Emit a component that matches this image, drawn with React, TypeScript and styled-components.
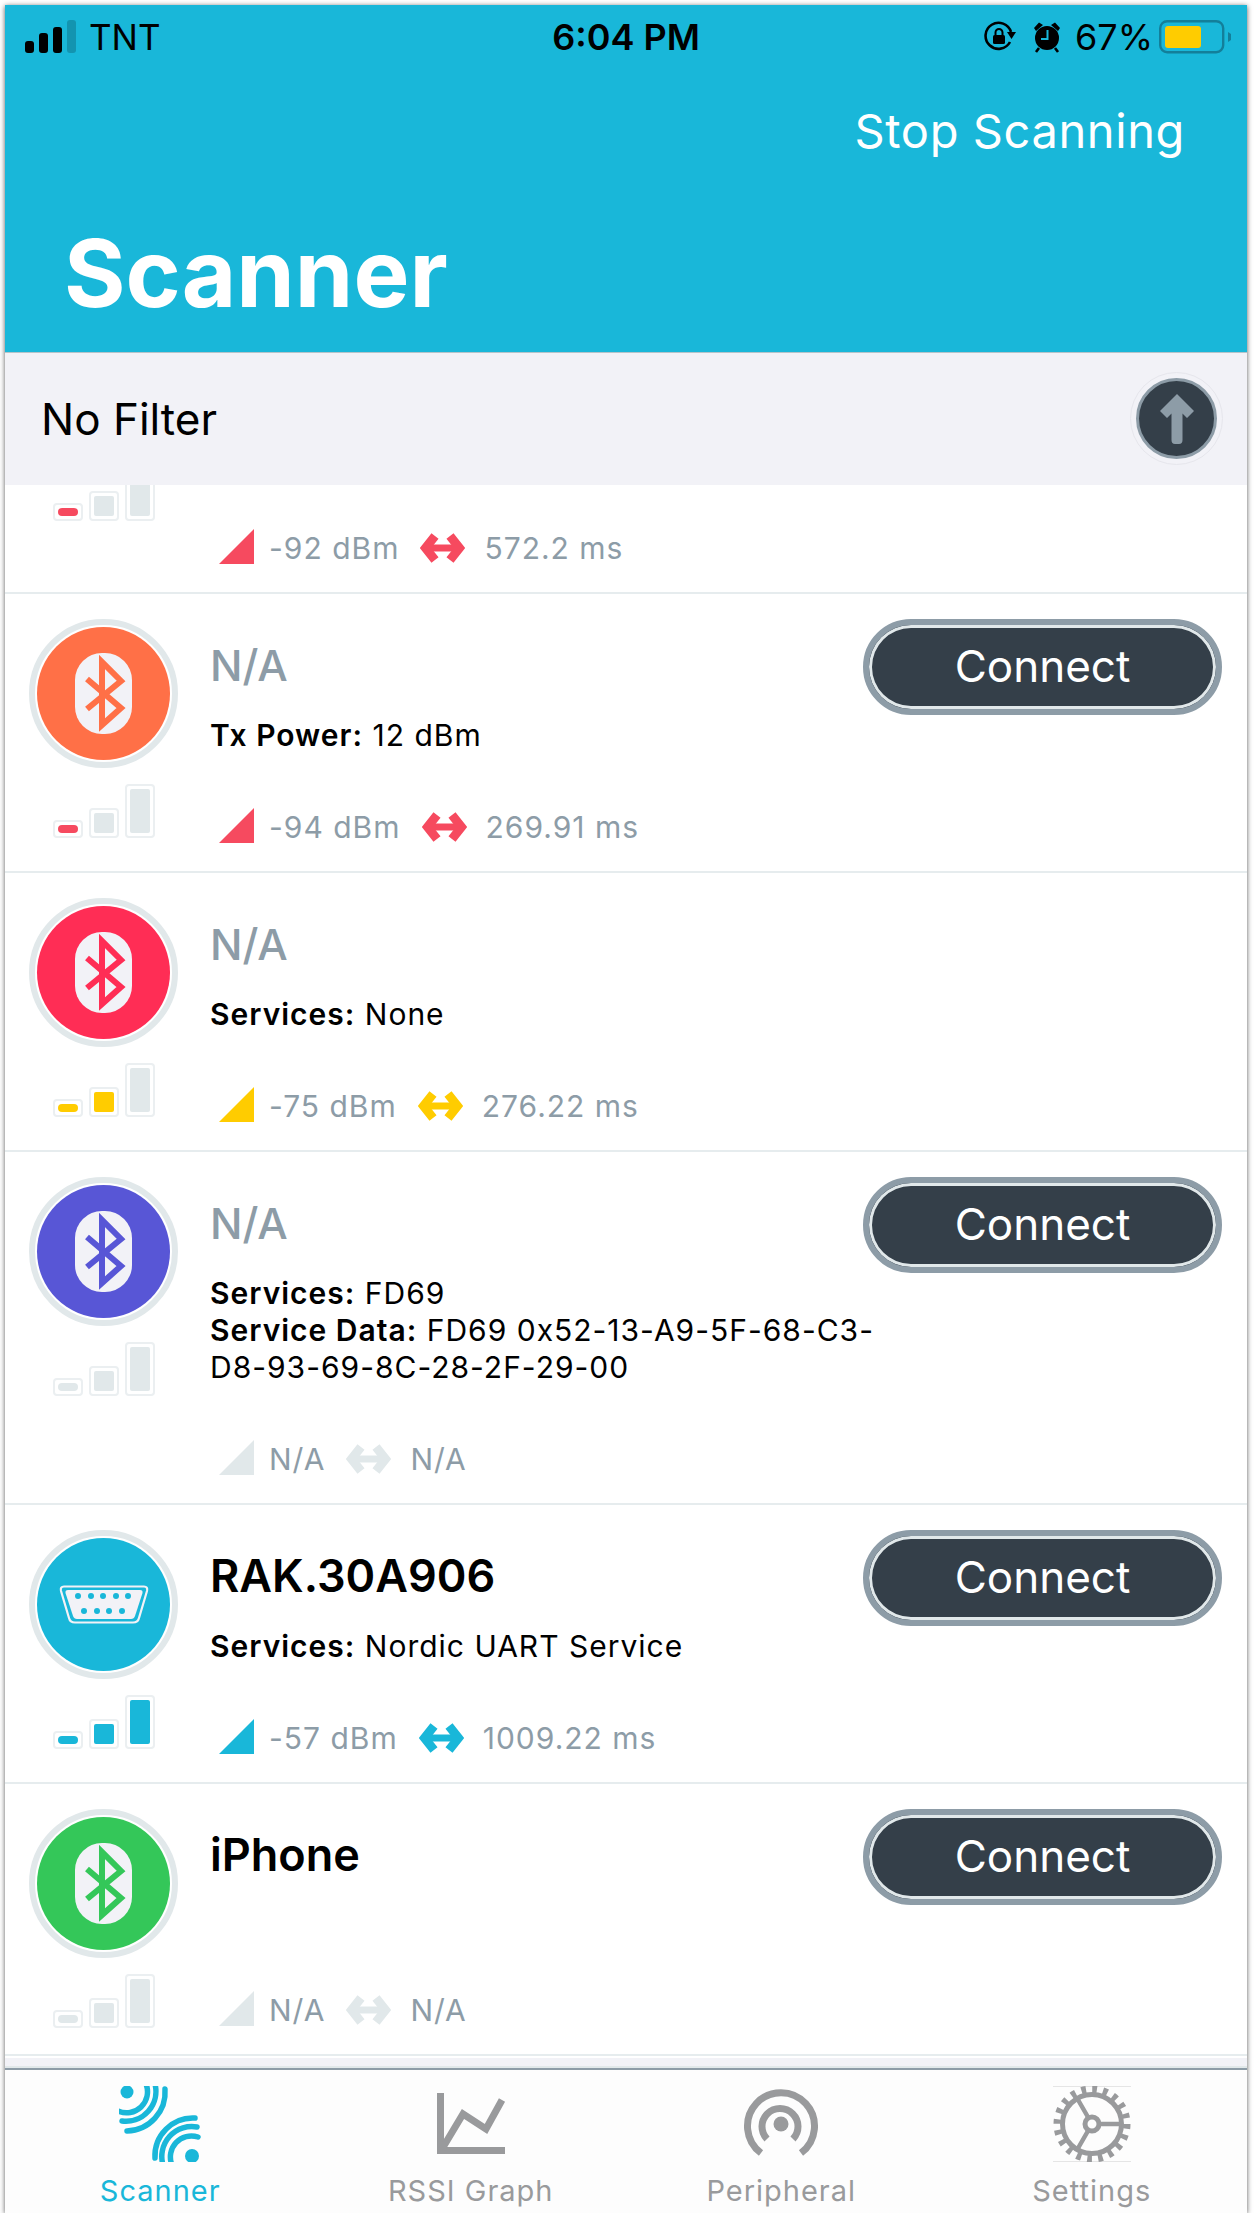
import React from "react";
import styled, { createGlobalStyle } from "styled-components";

const BLUE = "#19b7d9";
const SLATE = "#8d9ca7";
const DARK = "#343f49";
const PALE = "#e1e8ea";
const ICON_GRAY = "#999a9c";

const GlobalStyle = createGlobalStyle`
  html, body {
    margin: 0;
    padding: 0;
    background: #fff;
    overflow: hidden;
  }
  * {
    box-sizing: border-box;
  }
`;

type Reading = { rssi: string; interval: string; level: number; color: string };
type Device = {
  name: string;
  named?: boolean;
  color: string;
  kind?: "bluetooth" | "serial";
  connect?: boolean;
  details: { label: string; value: string }[];
  reading: Reading;
};

const RED = "#f64a5f";
const YELLOW = "#ffcc00";

const DEVICES: Device[] = [
  {
    name: "N/A",
    color: "#ff7047",
    details: [],
    reading: { rssi: "-92 dBm", interval: "572.2 ms", level: 1, color: RED },
  },
  {
    name: "N/A",
    color: "#ff7047",
    connect: true,
    details: [{ label: "Tx Power:", value: "12 dBm" }],
    reading: { rssi: "-94 dBm", interval: "269.91 ms", level: 1, color: RED },
  },
  {
    name: "N/A",
    color: "#ff2d55",
    details: [{ label: "Services:", value: "None" }],
    reading: { rssi: "-75 dBm", interval: "276.22 ms", level: 2, color: YELLOW },
  },
  {
    name: "N/A",
    color: "#5856d6",
    connect: true,
    details: [
      { label: "Services:", value: "FD69" },
      { label: "Service Data:", value: "FD69 0x52-13-A9-5F-68-C3-D8-93-69-8C-28-2F-29-00" },
    ],
    reading: { rssi: "N/A", interval: "N/A", level: 0, color: PALE },
  },
  {
    name: "RAK.30A906",
    named: true,
    color: BLUE,
    kind: "serial",
    connect: true,
    details: [{ label: "Services:", value: "Nordic UART Service" }],
    reading: { rssi: "-57 dBm", interval: "1009.22 ms", level: 3, color: BLUE },
  },
  {
    name: "iPhone",
    named: true,
    color: "#34c759",
    connect: true,
    details: [],
    reading: { rssi: "N/A", interval: "N/A", level: 0, color: PALE },
  },
];

const Frame = styled.div`
  width: 1242px;
  height: 2208px;
  margin: 5px 0 0 5px;
  display: flex;
  flex-direction: column;
  background: #fff;
  font-family: Inter, "Liberation Sans", sans-serif;
  box-shadow: 0 1px 5px rgba(0, 0, 0, 0.65);
`;

const Header = styled.header`
  height: 348px;
  flex: none;
  background: ${BLUE};
  color: #fff;
  border-bottom: 1px solid #b5c4ca;
  display: flex;
  flex-direction: column;
`;

const StatusBar = styled.div`
  margin-top: 14px;
  height: 36px;
  padding: 0 16px 0 20px;
  display: grid;
  grid-template-columns: 1fr auto 1fr;
  align-items: center;
  color: #000;
  font-size: 35px;
  line-height: 36px;
`;

const StatusLeft = styled.div`
  display: flex;
  align-items: center;
  gap: 12px;
`;

const StatusRight = styled.div`
  display: flex;
  align-items: center;
  justify-content: flex-end;
`;

const Clock = styled.div`
  font-size: 36px;
  font-weight: 600;
  margin-right: 4px;
`;

const Percent = styled.span`
  margin: 0 6px 0 14px;
  font-size: 36px;
`;

const AlarmSvg = styled.svg`
  margin-left: 17px;
`;

const ActionRow = styled.div`
  margin-top: 46px;
  padding-right: 62px;
  text-align: right;
  font-size: 47px;
  line-height: 60px;
  letter-spacing: 0.6px;
`;

const Title = styled.h1`
  margin: 62px 0 0;
  padding-left: 59px;
  font-size: 94px;
  line-height: 100px;
  font-weight: 700;
`;

const FilterBar = styled.div`
  height: 132px;
  flex: none;
  background: #f2f2f7;
  padding: 0 24px 0 36px;
  display: flex;
  align-items: center;
  justify-content: space-between;
  font-size: 44px;
  color: #000;
`;

const ArrowRing = styled.div`
  width: 93px;
  height: 93px;
  margin-top: -1px;
  padding: 5px;
  border: 1px solid #e6e6ec;
  border-radius: 50%;
`;

const ArrowButton = styled.div`
  width: 81px;
  height: 81px;
  border-radius: 50%;
  background: ${DARK};
  border: 3px solid ${SLATE};
  display: flex;
  align-items: center;
  justify-content: center;
`;

const List = styled.div`
  flex: 1;
  min-height: 0;
  overflow: hidden;
  background: #fff;
`;

const Row = styled.div<{ $scrolled?: boolean }>`
  display: flex;
  padding: 25px 25px 26px 24px;
  border-bottom: 2px solid #e6ecee;
  margin-top: ${(p) => (p.$scrolled ? "-208px" : "0")};
  min-height: ${(p) => (p.$scrolled ? "317px" : "279px")};
  &:last-child {
    min-height: 272px;
  }
`;

const LeftCol = styled.div`
  width: 149px;
  flex: none;
  display: flex;
  flex-direction: column;
  align-items: center;
  gap: 16px;
`;

const Avatar = styled.div`
  width: 149px;
  height: 149px;
  border-radius: 50%;
  border: 6px solid ${PALE};
  padding: 2px;
  background: #fff;
  background-clip: padding-box;
  display: flex;
`;

const AvatarFill = styled.div<{ $color: string }>`
  flex: 1;
  border-radius: 50%;
  background: ${(p) => p.$color};
  display: flex;
  align-items: center;
  justify-content: center;
`;

const Bars = styled.div`
  display: flex;
  align-items: flex-end;
  gap: 6px;
  height: 54px;
`;

const Bar = styled.div<{ $h: number }>`
  width: 30px;
  height: ${(p) => p.$h}px;
  border: 2px solid #ebeff1;
  border-radius: 4px;
  padding: 3px;
  display: flex;
`;

const BarFill = styled.div<{ $color: string; $first?: boolean }>`
  flex: 1;
  background: ${(p) => p.$color};
  border-radius: ${(p) => (p.$first ? "5px" : "2px")};
`;

const Main = styled.div`
  flex: 1;
  min-width: 0;
  margin-left: 32px;
  display: flex;
  flex-direction: column;
`;

const Name = styled.div<{ $named?: boolean }>`
  font-size: ${(p) => (p.$named ? "45px" : "43px")};
  line-height: 92px;
  font-weight: ${(p) => (p.$named ? 600 : 500)};
  color: ${(p) => (p.$named ? "#000" : SLATE)};
`;

const Details = styled.div`
  margin: 6px -14px 54px 0;
  font-size: 30px;
  line-height: 37px;
  letter-spacing: 1px;
  color: #000;
`;

const DetailLabel = styled.span`
  font-weight: 600;
`;

const Metrics = styled.div`
  margin-top: auto;
  margin-bottom: 2px;
  padding-left: 9px;
  height: 35px;
  display: flex;
  align-items: flex-end;
  font-size: 30px;
  line-height: 31px;
  letter-spacing: 1px;
  color: ${SLATE};
`;

const MetricText = styled.span`
  margin: 0 21px 0 15px;
`;

const ArrowIcon = styled.svg`
  margin-bottom: 1px;
  margin-right: 4px;
`;

const ConnectButton = styled.div`
  width: 359px;
  height: 96px;
  flex: none;
  border-radius: 48px;
  background: ${DARK};
  border: 6px solid ${SLATE};
  box-shadow: inset 0 0 0 3px ${PALE};
  color: #fff;
  font-size: 44px;
  padding-bottom: 2px;
  display: flex;
  align-items: center;
  justify-content: center;
`;

const BottomStrip = styled.div`
  height: 10px;
  flex: none;
  background: #f2f2f7;
  border-bottom: 2px solid ${PALE};
`;

const TabBar = styled.nav`
  height: 145px;
  flex: none;
  border-top: 2px solid ${SLATE};
  background: #fdfdfd;
  display: grid;
  grid-template-columns: repeat(4, 1fr);
`;

const Tab = styled.div<{ $active?: boolean }>`
  display: flex;
  flex-direction: column;
  align-items: center;
  padding-top: 16px;
  color: ${(p) => (p.$active ? BLUE : ICON_GRAY)};
`;

const TabLabel = styled.div`
  margin-top: 14px;
  font-size: 29px;
  line-height: 30px;
  letter-spacing: 1px;
`;

const SignalIcon = () => (
  <svg width="52" height="34" viewBox="0 0 52 34">
    <rect x="0" y="21" width="9" height="12" rx="3" fill="#000" />
    <rect x="14" y="13" width="9" height="20" rx="3" fill="#000" />
    <rect x="28" y="7" width="9" height="26" rx="3" fill="#000" />
    <rect x="42" y="0" width="9" height="33" rx="3" fill="#1394b0" />
  </svg>
);

const LockRotateIcon = () => (
  <svg width="32" height="32" viewBox="0 0 32 32">
    <path d="M26 21 A13 13 0 1 1 27 11" fill="none" stroke="#000" strokeWidth="2.6" />
    <path d="M23 11 L32 11 L27.5 18 Z" fill="#000" />
    <rect x="9" y="14" width="12" height="9" rx="1.5" fill="#000" />
    <path d="M11.5 14 V11.5 A3.5 3.5 0 0 1 18.5 11.5 V14" fill="none" stroke="#000" strokeWidth="2" />
  </svg>
);

const AlarmIcon = () => (
  <AlarmSvg width="28" height="32" viewBox="0 0 28 32">
    <circle cx="14" cy="17" r="12" fill="#000" />
    <path d="M1 7 L6 1.5 L10 4 L3 10 Z M27 7 L22 1.5 L18 4 L25 10 Z" fill="#000" />
    <path d="M6 27 L3 31 M22 27 L25 31" stroke="#000" strokeWidth="2.6" />
    <path d="M14.5 9 V18 H8" fill="none" stroke={BLUE} strokeWidth="2" />
  </AlarmSvg>
);

const BatteryIcon = () => (
  <svg width="72" height="34" viewBox="0 0 72 34">
    <rect x="1.2" y="1.2" width="63" height="31" rx="7" fill="none" stroke="#137f9a" strokeWidth="2.4" />
    <rect x="6" y="6" width="36" height="22" rx="3" fill="#ffcc00" />
    <path d="M69 12 L72 14 V20 L69 22 Z" fill="#137f9a" />
  </svg>
);

const BluetoothGlyph = ({ color }: { color: string }) => (
  <svg width="57" height="81" viewBox="0 0 57 81">
    <rect width="57" height="81" rx="27" fill="#f2f2f7" />
    <path
      d="M12 26 L46 55 L27 72 V9 L46 28 L12 56"
      fill="none"
      stroke={color}
      strokeWidth="6"
    />
  </svg>
);

const SerialGlyph = ({ color }: { color: string }) => (
  <svg width="90" height="39" viewBox="0 0 90 39">
    <path
      d="M5 1.5 H85 Q89 1.5 88 6 L80 33 Q79 37.5 74 37.5 H16 Q11 37.5 10 33 L2 6 Q1 1.5 5 1.5 Z"
      fill="none"
      stroke="#f2f2f7"
      strokeWidth="2.2"
    />
    <path d="M9 5 H81 Q84 5 83.5 8 L76 31 Q75 34 72 34 H18 Q15 34 14 31 L6.5 8 Q6 5 9 5 Z" fill="#f2f2f7" />
    {[19, 32, 44, 57, 69].map((x) => (
      <circle key={x} cx={x} cy="11" r="3" fill={color} />
    ))}
    {[25, 38, 50, 63].map((x) => (
      <circle key={x} cx={x} cy="26" r="3" fill={color} />
    ))}
  </svg>
);

const Triangle = ({ color }: { color: string }) => (
  <svg width="35" height="35" viewBox="0 0 35 35">
    <path d="M0 35 L35 0 V35 Z" fill={color} />
  </svg>
);

const DoubleArrow = ({ color }: { color: string }) => (
  <ArrowIcon width="45" height="30" viewBox="0 0 45 30">
    <path
      d="M15 3 L5.5 15 L15 27 M30 3 L39.5 15 L30 27"
      fill="none"
      stroke={color}
      strokeWidth="9"
      strokeLinejoin="miter"
    />
    <path d="M8 15 H37" stroke={color} strokeWidth="7" />
  </ArrowIcon>
);

const SignalBars = ({ level, color }: { level: number; color: string }) => (
  <Bars>
    <Bar $h={18}>
      <BarFill $first $color={level >= 1 ? color : PALE} />
    </Bar>
    <Bar $h={30}>
      <BarFill $color={level >= 2 ? color : PALE} />
    </Bar>
    <Bar $h={54}>
      <BarFill $color={level >= 3 ? color : PALE} />
    </Bar>
  </Bars>
);

const ScannerIcon = () => (
  <svg width="82" height="76" viewBox="0 0 82 76" fill="none" stroke={BLUE} strokeWidth="5.5" strokeLinecap="round">
    <circle cx="8" cy="6" r="6.5" fill={BLUE} stroke="none" />
    <path d="M27 -2 A21 21 0 0 1 -1 25" />
    <path d="M36 -2 A30 30 0 0 1 3 35" />
    <path d="M46 3 A39 39 0 0 1 8 45" />
    <circle cx="73" cy="70" r="7" fill={BLUE} stroke="none" />
    <path d="M53 79 A21 21 0 0 1 79 51" />
    <path d="M44 79 A30 30 0 0 1 78 41" />
    <path d="M36 72 A38 38 0 0 1 76 32" />
  </svg>
);

const GraphIcon = () => (
  <svg width="80" height="76" viewBox="0 0 80 76" fill="none" stroke={ICON_GRAY} strokeWidth="7">
    <path d="M9.5 7 V64.5 H74" />
    <path d="M11 63 L32 28 L55 43 L71 14" />
  </svg>
);

const PeripheralIcon = () => (
  <svg width="80" height="76" viewBox="0 0 80 76" fill="none" stroke={ICON_GRAY} strokeWidth="7">
    <circle cx="40" cy="38" r="7.5" fill={ICON_GRAY} stroke="none" />
    <path d="M26 53 A18 18 0 1 1 52 53" />
    <path d="M20 67 A33.5 33.5 0 1 1 60 67" />
  </svg>
);

const GearIcon = () => (
  <svg width="80" height="76" viewBox="0 0 80 76" fill="none" stroke={ICON_GRAY}>
    <path d="M1 0.5 H79 M1 75.5 H79" stroke="#e5e5e5" strokeWidth="1" />
    <circle cx="40" cy="38" r="29.5" strokeWidth="5" />
    <circle cx="40" cy="38" r="34" strokeWidth="9" strokeDasharray="4.6 6.08" />
    <circle cx="40" cy="38" r="7" strokeWidth="5" />
    <path d="M47 38 H69 M36.5 32 L25 12 M36.5 44 L25 64" strokeWidth="4.5" />
  </svg>
);

const DeviceRow = ({ device, scrolled }: { device: Device; scrolled?: boolean }) => {
  const { reading } = device;
  return (
    <Row $scrolled={scrolled}>
      <LeftCol>
        <Avatar>
          <AvatarFill $color={device.color}>
            {device.kind === "serial" ? (
              <SerialGlyph color={device.color} />
            ) : (
              <BluetoothGlyph color={device.color} />
            )}
          </AvatarFill>
        </Avatar>
        <SignalBars level={reading.level} color={reading.color} />
      </LeftCol>
      <Main>
        <Name $named={device.named}>{device.name}</Name>
        {device.details.length > 0 && (
          <Details>
            {device.details.map((d) => (
              <div key={d.label}>
                <DetailLabel>{d.label}</DetailLabel> {d.value}
              </div>
            ))}
          </Details>
        )}
        <Metrics>
          <Triangle color={reading.color} />
          <MetricText>{reading.rssi}</MetricText>
          <DoubleArrow color={reading.color} />
          <MetricText>{reading.interval}</MetricText>
        </Metrics>
      </Main>
      {device.connect && <ConnectButton>Connect</ConnectButton>}
    </Row>
  );
};

const App = () => {
  return (
    <Frame>
      <GlobalStyle />
      <Header>
        <StatusBar>
          <StatusLeft>
            <SignalIcon />
            <span>TNT</span>
          </StatusLeft>
          <Clock>6:04 PM</Clock>
          <StatusRight>
            <LockRotateIcon />
            <AlarmIcon />
            <Percent>67%</Percent>
            <BatteryIcon />
          </StatusRight>
        </StatusBar>
        <ActionRow>Stop Scanning</ActionRow>
        <Title>Scanner</Title>
      </Header>
      <FilterBar>
        <span>No Filter</span>
        <ArrowRing>
          <ArrowButton>
            <svg width="36" height="50" viewBox="0 0 36 50">
              <path
                d="M18 0 L35 17 L28 24 L23.5 19.5 V46 Q23.5 50 20 50 H16 Q12.5 50 12.5 46 V19.5 L8 24 L1 17 Z"
                fill={SLATE}
              />
            </svg>
          </ArrowButton>
        </ArrowRing>
      </FilterBar>
      <List>
        {DEVICES.map((device, idx) => (
          <DeviceRow key={`${device.name}_${idx}`} device={device} scrolled={idx === 0} />
        ))}
      </List>
      <BottomStrip />
      <TabBar>
        <Tab $active>
          <ScannerIcon />
          <TabLabel>Scanner</TabLabel>
        </Tab>
        <Tab>
          <GraphIcon />
          <TabLabel>RSSI Graph</TabLabel>
        </Tab>
        <Tab>
          <PeripheralIcon />
          <TabLabel>Peripheral</TabLabel>
        </Tab>
        <Tab>
          <GearIcon />
          <TabLabel>Settings</TabLabel>
        </Tab>
      </TabBar>
    </Frame>
  );
};

export default App;
